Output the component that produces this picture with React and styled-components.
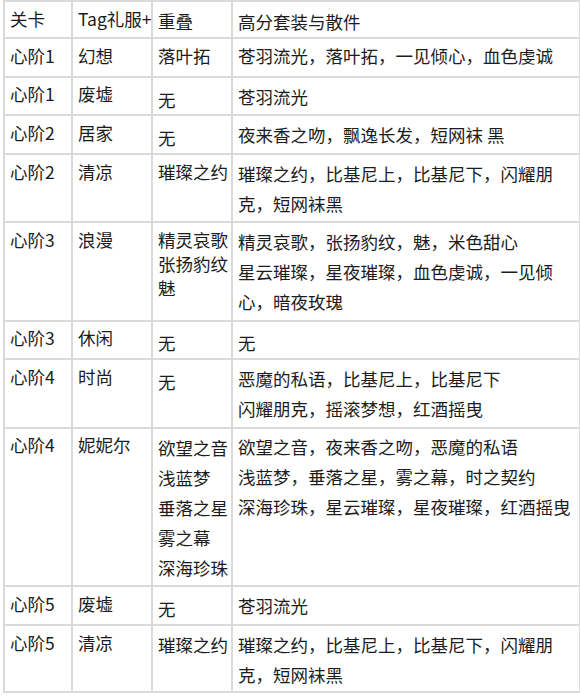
import React from "react";
import styled, { createGlobalStyle } from "styled-components";

const Global = createGlobalStyle`
  html, body {
    margin: 0;
    padding: 0;
    background: #ffffff;
  }
  body {
    font-family: "Noto Sans CJK SC", "Noto Sans", sans-serif;
    color: #1c1c1c;
  }
`;

const Page = styled.div`
  width: 580px;
  height: 697px;
  padding: 0 0 0 3px;
  box-sizing: border-box;
`;

const Table = styled.table`
  border-collapse: collapse;
  table-layout: fixed;
  width: 576px;
  font-size: 17.5px;
`;

const Cell = styled.td`
  border: 2px solid #dadada;
  vertical-align: top;
  white-space: nowrap;
  padding: 0;
`;

const Inner = styled.div`
  height: ${(p) => p.$h}px;
  box-sizing: border-box;
  padding: ${(p) => p.$top}px 2px 0 5px;
  overflow: visible;
`;

const Line = styled.div`
  height: ${(p) => p.$lh}px;
  line-height: ${(p) => p.$lh}px;
`;

const widths = [68, 80, 80, 348];

const rows = [
  { h: 37, cells: [["关卡"], ["Tag礼服+"], ["重叠"], ["高分套装与散件"]], drop: [0, 0, 2, 3] },
  { h: 39, cells: [["心阶1"], ["幻想"], ["落叶拓"], ["苍羽流光，落叶拓，一见倾心，血色虔诚"]] },
  { h: 38, cells: [["心阶1"], ["废墟"], ["无"], ["苍羽流光"]], drop: [-1, -1, 5, 2] },
  { h: 39, cells: [["心阶2"], ["居家"], ["无"], ["夜来香之吻，飘逸长发，短网袜 黑"]], drop: [0, 0, 5, 2] },
  {
    h: 68,
    cells: [["心阶2"], ["清凉"], ["璀璨之约"], ["璀璨之约，比基尼上，比基尼下，闪耀朋", "克，短网袜黑"]],
    drop: [0, 0, 0, 2],
  },
  {
    h: 99,
    cells: [
      ["心阶3"],
      ["浪漫"],
      ["精灵哀歌", "张扬豹纹", "魅"],
      ["精灵哀歌，张扬豹纹，魅，米色甜心", "星云璀璨，星夜璀璨，血色虔诚，一见倾", "心，暗夜玫瑰"],
    ],
    drop: [0, 0, 3, 2],
    tight: [false, false, true, false],
  },
  { h: 38, cells: [["心阶3"], ["休闲"], ["无"], ["无"]], drop: [-1, -1, 4, 4] },
  {
    h: 69,
    cells: [["心阶4"], ["时尚"], ["无"], ["恶魔的私语，比基尼上，比基尼下", "闪耀朋克，摇滚梦想，红酒摇曳"]],
    drop: [0, 0, 5, 2],
  },
  {
    h: 158,
    cells: [
      ["心阶4"],
      ["妮妮尔"],
      ["欲望之音", "浅蓝梦", "垂落之星", "雾之幕", "深海珍珠"],
      ["欲望之音，夜来香之吻，恶魔的私语", "浅蓝梦，垂落之星，雾之幕，时之契约", "深海珍珠，星云璀璨，星夜璀璨，红酒摇曳"],
    ],
    drop: [-1, -1, 2, 1],
  },
  { h: 39, cells: [["心阶5"], ["废墟"], ["无"], ["苍羽流光"]], drop: [0, 0, 5, 2] },
  {
    h: 67,
    cells: [["心阶5"], ["清凉"], ["璀璨之约"], ["璀璨之约，比基尼上，比基尼下，闪耀朋", "克，短网袜黑"]],
    drop: [0, 0, 2, 2],
  },
];

export default function App() {
  return (
    <Page>
      <Global />
      <Table>
        <colgroup>
          {widths.map((w, i) => (
            <col key={i} style={{ width: w }} />
          ))}
        </colgroup>
        <tbody>
          {rows.map((r, i) => (
            <tr key={i}>
              {r.cells.map((lines, j) => {
                const tight = r.tight && r.tight[j];
                const drop = r.drop ? r.drop[j] : 0;
                return (
                  <Cell key={j}>
                    <Inner $h={r.h - 2} $top={(tight ? 5 : 2) + drop - (tight ? 3 : 0)}>
                      {lines.map((t, k) => (
                        <Line key={k} $lh={tight ? 24 : 30}>
                          {t}
                        </Line>
                      ))}
                    </Inner>
                  </Cell>
                );
              })}
            </tr>
          ))}
        </tbody>
      </Table>
    </Page>
  );
}
